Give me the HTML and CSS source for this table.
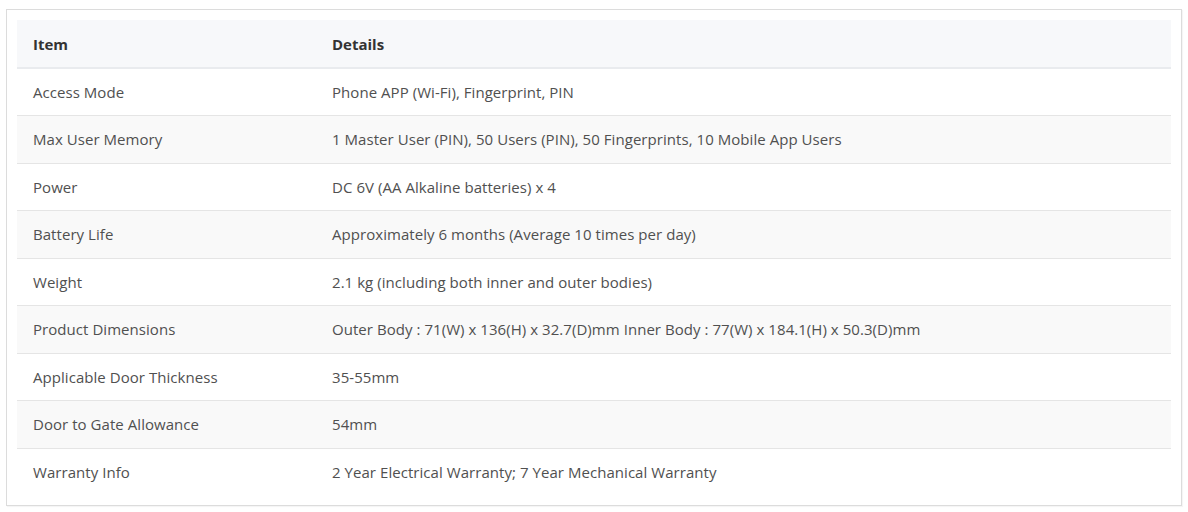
FILE: index.html
```html
<!DOCTYPE html>
<html>
<head>
<meta charset="utf-8">
<link rel="stylesheet" href="styles.css">
</head>
<body>
<div class="card">
  <table class="spec">
    <thead>
      <tr><th class="c1">Item</th><th>Details</th></tr>
    </thead>
    <tbody>
      <tr><td class="c1">Access Mode</td><td>Phone APP (Wi-Fi), Fingerprint, PIN</td></tr>
      <tr><td class="c1">Max User Memory</td><td>1 Master User (PIN), 50 Users (PIN), 50 Fingerprints, 10 Mobile App Users</td></tr>
      <tr><td class="c1">Power</td><td>DC 6V (AA Alkaline batteries) x 4</td></tr>
      <tr><td class="c1">Battery Life</td><td>Approximately 6 months (Average 10 times per day)</td></tr>
      <tr><td class="c1">Weight</td><td>2.1 kg (including both inner and outer bodies)</td></tr>
      <tr><td class="c1">Product Dimensions</td><td>Outer Body : 71(W) x 136(H) x 32.7(D)mm Inner Body : 77(W) x 184.1(H) x 50.3(D)mm</td></tr>
      <tr><td class="c1">Applicable Door Thickness</td><td>35-55mm</td></tr>
      <tr><td class="c1">Door to Gate Allowance</td><td>54mm</td></tr>
      <tr><td class="c1">Warranty Info</td><td>2 Year Electrical Warranty; 7 Year Mechanical Warranty</td></tr>
    </tbody>
  </table>
</div>
</body>
</html>
```
FILE: styles.css
```css
html, body {
  margin: 0;
  padding: 0;
  background: #ffffff;
}
body {
  padding: 9px 6px;
  font-family: "Open Sans", "Liberation Sans", sans-serif;
}
.card {
  border: 1px solid #dcdcdc;
  padding: 10px;
  box-shadow: 1px 1px 1px rgba(0,0,0,0.04);
  background: #fff;
}
.spec {
  width: 100%;
  border-collapse: collapse;
  font-size: 15px;
  line-height: 22.5px;
  letter-spacing: 0.05px;
}
.spec th, .spec td {
  text-align: left;
  padding: 12px 16px;
  vertical-align: middle;
}
.spec th {
  font-weight: 700;
  color: #333;
  background: #f7f8fa;
  border-bottom: 2px solid #e9ebee;
  padding-top: 13px;
  padding-bottom: 11px;
  letter-spacing: 0;
}
.spec td {
  color: #505050;
  border-bottom: 1px solid #e5e5e5;
}
.spec tbody tr:nth-child(even) td {
  background: #f9f9f9;
}
.spec tbody tr:last-child td {
  border-bottom: none;
}
.spec .c1 {
  width: 267px;
}
```
